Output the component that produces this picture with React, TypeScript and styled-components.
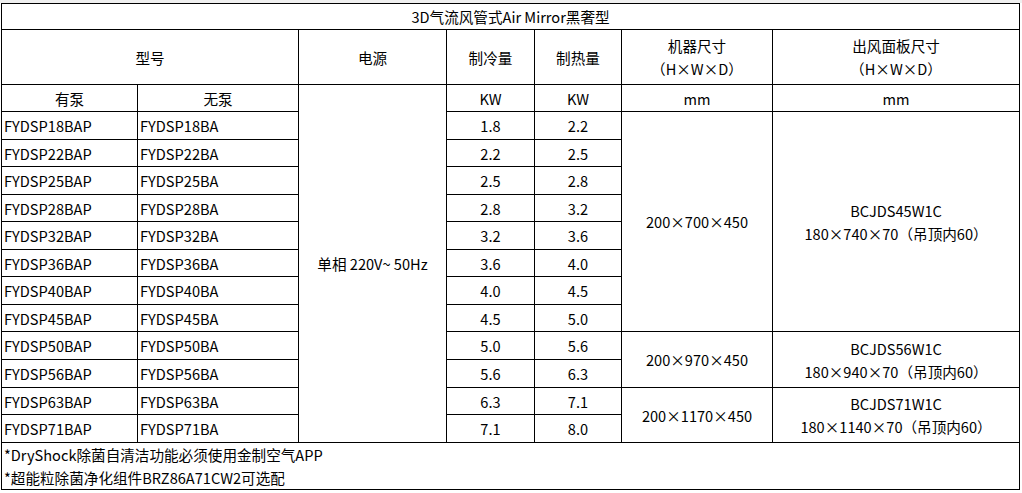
import React from "react";
import styled, { createGlobalStyle } from "styled-components";

const GlobalStyle = createGlobalStyle`
  html, body {
    margin: 0;
    padding: 0;
    background: #fff;
  }
  body {
    font-family: "Noto Sans CJK SC", "Noto Sans", sans-serif;
    color: #000;
  }
`;

const Page = styled.div`
  width: 1022px;
  height: 493px;
  overflow: hidden;
  background: #fff;
`;

const TopStrip = styled.div`
  height: 3px;
  background: #efefef;
`;

const Wrap = styled.div`
  padding-left: 1px;
`;

const Table = styled.table`
  border-collapse: collapse;
  table-layout: fixed;
  width: 1018px;
  font-size: 14.6px;
  line-height: 23px;
`;

const Cell = styled.td<{ $left?: boolean; $h?: number }>`
  border: 1px solid #000;
  padding: 0 ${({ $left }) => ($left ? "2px" : "0")};
  text-align: ${({ $left }) => ($left ? "left" : "center")};
  vertical-align: middle;
  height: ${({ $h }) => ($h ? `${$h}px` : "auto")};
  white-space: nowrap;
  font-weight: normal;
  box-sizing: border-box;
`;

const Footer = styled.td`
  border: 1px solid #000;
  padding: 0 2px;
  text-align: left;
  height: 45px;
  line-height: 23px;
  vertical-align: middle;
`;

const Line = styled.div`
  white-space: nowrap;
`;

const widths = [136, 161, 148, 88, 87, 151, 247];

type Row = { pump: string; nopump: string; cool: string; heat: string };

const rows: Row[] = [
  { pump: "FYDSP18BAP", nopump: "FYDSP18BA", cool: "1.8", heat: "2.2" },
  { pump: "FYDSP22BAP", nopump: "FYDSP22BA", cool: "2.2", heat: "2.5" },
  { pump: "FYDSP25BAP", nopump: "FYDSP25BA", cool: "2.5", heat: "2.8" },
  { pump: "FYDSP28BAP", nopump: "FYDSP28BA", cool: "2.8", heat: "3.2" },
  { pump: "FYDSP32BAP", nopump: "FYDSP32BA", cool: "3.2", heat: "3.6" },
  { pump: "FYDSP36BAP", nopump: "FYDSP36BA", cool: "3.6", heat: "4.0" },
  { pump: "FYDSP40BAP", nopump: "FYDSP40BA", cool: "4.0", heat: "4.5" },
  { pump: "FYDSP45BAP", nopump: "FYDSP45BA", cool: "4.5", heat: "5.0" },
  { pump: "FYDSP50BAP", nopump: "FYDSP50BA", cool: "5.0", heat: "5.6" },
  { pump: "FYDSP56BAP", nopump: "FYDSP56BA", cool: "5.6", heat: "6.3" },
  { pump: "FYDSP63BAP", nopump: "FYDSP63BA", cool: "6.3", heat: "7.1" },
  { pump: "FYDSP71BAP", nopump: "FYDSP71BA", cool: "7.1", heat: "8.0" },
];

// size groups keyed by first row: [span, unit size, panel model, panel size]
const groups: Record<number, [number, string, string, string]> = {
  0: [8, "200×700×450", "BCJDS45W1C", "180×740×70（吊顶内60）"],
  8: [2, "200×970×450", "BCJDS56W1C", "180×940×70（吊顶内60）"],
  10: [2, "200×1170×450", "BCJDS71W1C", "180×1140×70（吊顶内60）"],
};

const rowHeights = [28, 27, 28, 27, 28, 27, 28, 27, 28, 28, 27, 28];

export default function App() {
  return (
    <Page>
      <GlobalStyle />
      <TopStrip />
      <Wrap>
        <Table>
          <colgroup>
            {widths.map((w, i) => (
              <col key={i} style={{ width: w }} />
            ))}
          </colgroup>
          <tbody>
            <tr>
              <Cell colSpan={7} $h={26}>
                3D气流风管式Air Mirror黑奢型
              </Cell>
            </tr>
            <tr>
              <Cell colSpan={2} $h={55}>
                型号
              </Cell>
              <Cell>电源</Cell>
              <Cell>制冷量</Cell>
              <Cell>制热量</Cell>
              <Cell>
                机器尺寸
                <br />（H×W×D）
              </Cell>
              <Cell>
                出风面板尺寸
                <br />（H×W×D）
              </Cell>
            </tr>
            <tr>
              <Cell $h={27}>有泵</Cell>
              <Cell>无泵</Cell>
              <Cell rowSpan={13}>单相 220V~ 50Hz</Cell>
              <Cell>KW</Cell>
              <Cell>KW</Cell>
              <Cell>mm</Cell>
              <Cell>mm</Cell>
            </tr>
            {rows.map((r, i) => {
              const g = groups[i];
              return (
                <tr key={r.pump}>
                  <Cell $left $h={rowHeights[i]}>
                    {r.pump}
                  </Cell>
                  <Cell $left>{r.nopump}</Cell>
                  <Cell>{r.cool}</Cell>
                  <Cell>{r.heat}</Cell>
                  {g && (
                    <>
                      <Cell rowSpan={g[0]}>{g[1]}</Cell>
                      <Cell rowSpan={g[0]}>
                        {g[2]}
                        <br />
                        {g[3]}
                      </Cell>
                    </>
                  )}
                </tr>
              );
            })}
            <tr>
              <Footer colSpan={7}>
                <Line>*DryShock除菌自清洁功能必须使用金制空气APP</Line>
                <Line>*超能粒除菌净化组件BRZ86A71CW2可选配</Line>
              </Footer>
            </tr>
          </tbody>
        </Table>
      </Wrap>
    </Page>
  );
}
